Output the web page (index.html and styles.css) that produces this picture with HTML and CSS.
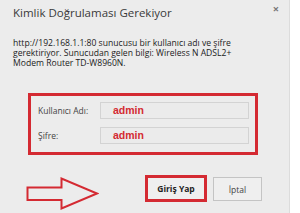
FILE: index.html
```html
<!DOCTYPE html>
<html>
<head>
<meta charset="utf-8">
<link rel="stylesheet" href="styles.css">
</head>
<body>
<div class="dialog">
  <div class="titlebar">
    <span class="title">Kimlik Doğrulaması Gerekiyor</span>
    <span class="close">×</span>
  </div>
  <p class="message">http://192.168.1.1:80 sunucusu bir kullanıcı adı ve şifre gerektiriyor. Sunucudan gelen bilgi: Wireless N ADSL2+ Modem Router TD-W8960N.</p>
  <div class="credbox">
    <div class="row">
      <span class="label">Kullanıcı Adı:</span>
      <span class="input">admin</span>
    </div>
    <div class="row">
      <span class="label">Şifre:</span>
      <span class="input">admin</span>
    </div>
  </div>
  <div class="footer">
    <svg class="arrow" width="73" height="33" viewBox="0 0 73 33">
      <polygon points="1.5,10.5 35.5,10.5 35.5,1.5 71,16.5 35.5,31.5 35.5,23 1.5,23" fill="none" stroke="#d42a32" stroke-width="2"/>
    </svg>
    <div class="hilite"><span class="btn primary">Giriş Yap</span></div>
    <span class="btn cancel">İptal</span>
  </div>
</div>
</body>
</html>
```
FILE: styles.css
```css
html, body {
  margin: 0;
  padding: 0;
  background: #ffffff;
}
body {
  width: 300px;
  height: 213px;
  overflow: hidden;
  font-family: "Open Sans", "Noto Sans", sans-serif;
  color: #333;
}
.dialog {
  width: 289px;
  height: 213px;
  background: #ececec;
  border-right: 1px solid #dcdcdc;
  box-sizing: content-box;
  display: flex;
  flex-direction: column;
}
.titlebar {
  display: flex;
  justify-content: space-between;
  align-items: flex-start;
  padding: 5px 10px 0 13px;
  height: 38px;
  box-sizing: border-box;
}
.title {
  font-size: 11.5px;
  line-height: 16px;
  color: #3a3a3a;
}
.close {
  font-size: 11px;
  line-height: 8px;
  color: #777;
  font-weight: bold;
}
.message {
  margin: 0;
  padding: 0 30px 0 13px;
  font-size: 8.6px;
  line-height: 10px;
  color: #222;
  height: 55px;
}
.credbox {
  margin-left: 28px;
  width: 230px;
  height: 62px;
  box-sizing: border-box;
  border: 3px solid #d42a32;
  padding: 6px 6px 0 7px;
  display: flex;
  flex-direction: column;
  gap: 8px;
}
.row {
  display: flex;
  align-items: center;
}
.label {
  width: 62px;
  font-size: 8.5px;
  color: #444;
}
.input {
  flex: 1;
  height: 17px;
  box-sizing: border-box;
  border: 1px solid #d3d3d3;
  background: #ebebeb;
  color: #d42a32;
  font-weight: bold;
  font-size: 10.5px;
  line-height: 15px;
  padding-left: 12px;
  font-family: "Liberation Sans", Arial, sans-serif;
}
.footer {
  display: flex;
  align-items: flex-start;
  margin-top: 20px;
  padding-left: 26px;
}
.arrow {
  display: block;
  margin-top: 2px;
}
.hilite {
  margin-left: 46px;
  width: 62px;
  height: 27px;
  box-sizing: border-box;
  border: 3px solid #d42a32;
  display: flex;
}
.btn {
  display: flex;
  align-items: center;
  justify-content: center;
  font-size: 8.5px;
  box-sizing: border-box;
}
.primary {
  flex: 1;
  font-weight: bold;
  background: #efefef;
  color: #222;
}
.cancel {
  margin-left: 6px;
  margin-top: 2px;
  width: 49px;
  height: 24px;
  border: 1px solid #c4c4c4;
  background: #efefef;
  color: #444;
}
```
